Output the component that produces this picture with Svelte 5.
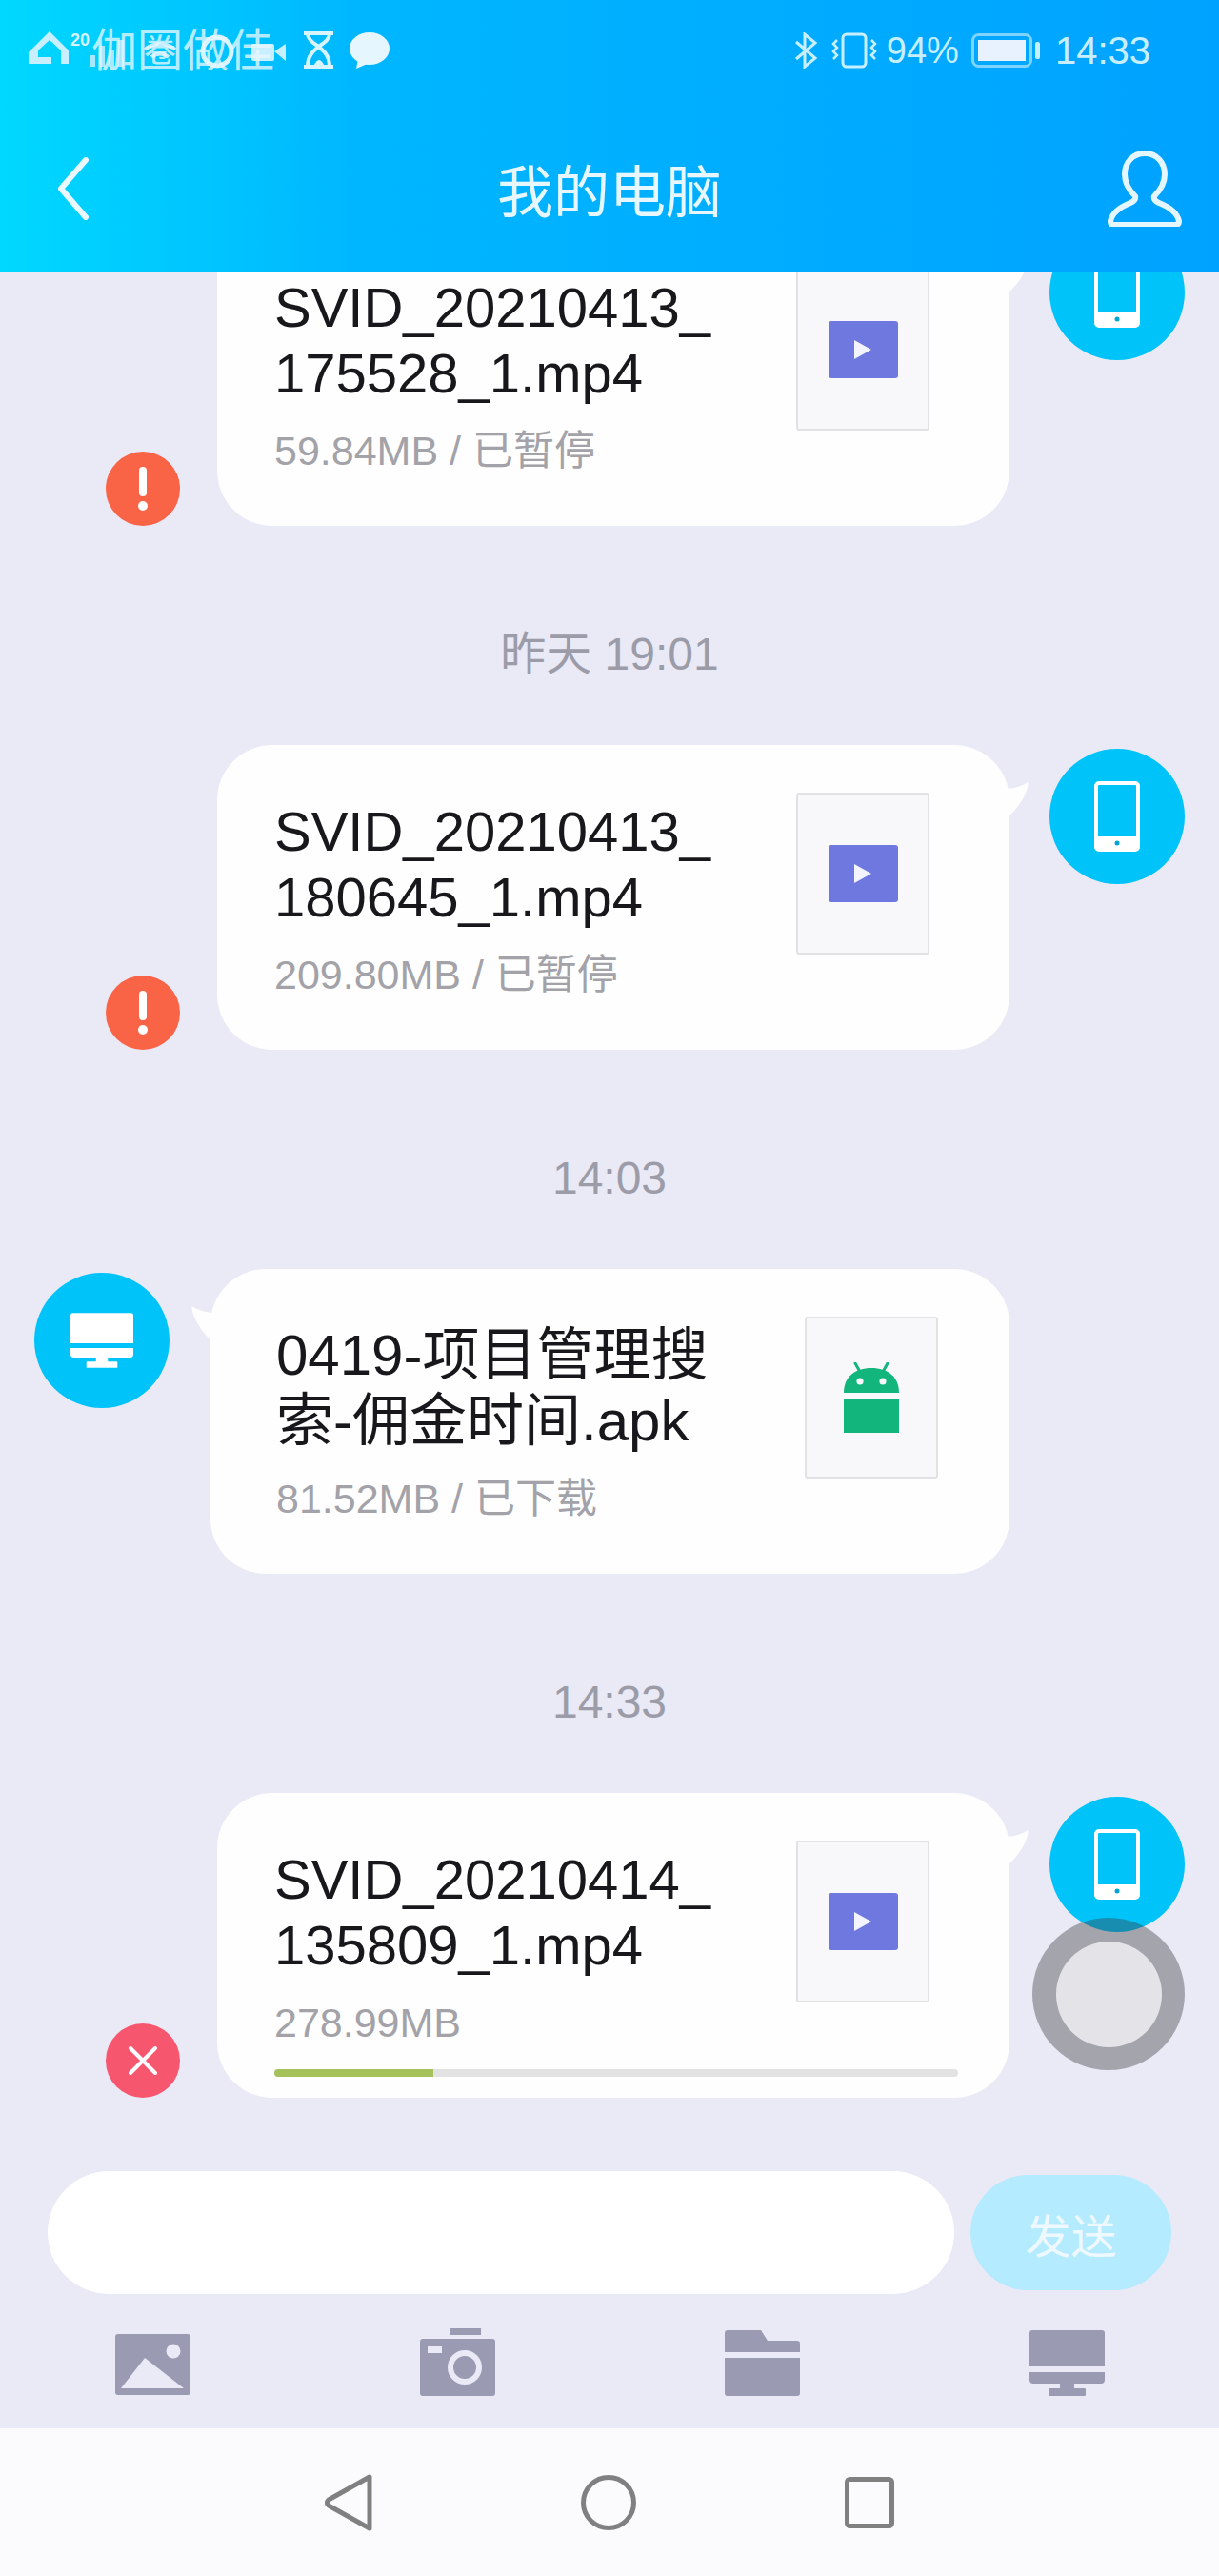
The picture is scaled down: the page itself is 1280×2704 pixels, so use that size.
<script>
  const entries = [
    { time: '', side: 'out', name: 'SVID_20210413_175528_1.mp4', size: '59.84MB / 已暂停', kind: 'video', badge: 'warn' },
    { time: '昨天 19:01', side: 'out', name: 'SVID_20210413_180645_1.mp4', size: '209.80MB / 已暂停', kind: 'video', badge: 'warn' },
    { time: '14:03', side: 'in', name: '0419-项目管理搜索-佣金时间.apk', size: '81.52MB / 已下载', kind: 'apk' },
    { time: '14:33', side: 'out', name: 'SVID_20210414_135809_1.mp4', size: '278.99MB', kind: 'video', badge: 'cancel', progress: 23.3 }
  ];
</script>

{#snippet phoneIcon()}
  <svg class="avatar-icon" width="48" height="74" viewBox="0 0 48 74">
    <rect x="2" y="2" width="44" height="70" rx="3" fill="none" stroke="#fff" stroke-width="4" />
    <rect x="2" y="58" width="44" height="14" fill="#fff" />
    <circle cx="24" cy="65" r="2.5" fill="#00a5d8" />
  </svg>
{/snippet}

{#snippet monitorIcon(w, h, fill)}
  <svg width={w} height={h} viewBox="0 0 79 69">
    <path d="M3 0H76a3 3 0 0 1 3 3V38H0V3a3 3 0 0 1 3-3Z" fill={fill} />
    <path d="M0 44H79V52a4 4 0 0 1-4 4H4a4 4 0 0 1-4-4Z" fill={fill} />
    <rect x="32" y="56" width="15" height="6" fill={fill} />
    <rect x="20" y="61" width="39" height="8" rx="1" fill={fill} />
  </svg>
{/snippet}

<div class="phone">
  <header class="top">
    <div class="status">
      <svg class="status-left" width="400" height="70" viewBox="0 0 400 70">
        <path d="M10 40 L32 18 L52 38 V52 H44 V38 L32 27 L20 38 V45 H34 V52 H10Z" fill="#c8efff" transform="translate(0 -3)" />
        <text x="54" y="30" class="tiny">20</text>
        <g fill="#a8e8ff">
          <rect x="74" y="40" width="6" height="12" />
          <rect x="84" y="30" width="6" height="22" />
          <rect x="94" y="34" width="6" height="18" />
          <rect x="104" y="24" width="6" height="28" />
        </g>
        <path d="M132 34 q16-12 32 0 M139 42 q9-7 18 0" fill="none" stroke="#c8efff" stroke-width="4" />
        <circle cx="208" cy="36" r="15" fill="none" stroke="#d8f4ff" stroke-width="5" />
        <rect x="244" y="28" width="24" height="18" rx="2" fill="#c8efff" />
        <path d="M268 36 L280 28 V46Z" fill="#c8efff" />
        <path d="M299 17 H330 M299 52 H330 M303 17 C303 30 326 30 326 52 M326 17 C326 30 303 30 303 52" fill="none" stroke="#d8f4ff" stroke-width="4" />
        <path d="M309 52 Q315 38 321 52Z" fill="#d8f4ff" />
        <ellipse cx="368" cy="33" rx="21" ry="17" fill="#e6f6ff" />
        <path d="M356 44 L354 54 L368 48Z" fill="#e6f6ff" />
      </svg>
      <span class="ghost-title">伽圈做佳</span>

      <div class="status-right">
        <svg width="26" height="38" viewBox="0 0 26 38">
          <path d="M3 10 L23 27 L12 36 V2 L23 11 L3 28" fill="none" stroke="#c8efff" stroke-width="3" />
        </svg>
        <svg class="vibrate" width="52" height="38" viewBox="0 0 52 38">
          <rect x="14" y="2" width="24" height="34" rx="4" fill="none" stroke="#c8efff" stroke-width="3" />
          <path d="M8 8 l-4 4 4 4 -4 4 4 4 -4 4 M44 8 l4 4 -4 4 4 4 -4 4 4 4" fill="none" stroke="#c8efff" stroke-width="2.5" />
        </svg>
        <span class="pct">94%</span>
        <svg class="battery" width="72" height="36" viewBox="0 0 72 36">
          <rect x="1.5" y="1.5" width="61" height="33" rx="6" fill="none" stroke="#7fd4ff" stroke-width="3" />
          <rect x="7" y="7" width="50" height="22" fill="#e8f2ff" />
          <rect x="67" y="9" width="5" height="18" rx="2" fill="#c8efff" />
        </svg>
        <span class="clock">14:33</span>
      </div>
    </div>

    <div class="nav">
      <svg class="back" width="34" height="66" viewBox="0 0 34 66">
        <path d="M30 3 L4 33 L30 63" fill="none" stroke="#eaf8ff" stroke-width="6" stroke-linecap="round" stroke-linejoin="round" />
      </svg>
      <h1>我的电脑</h1>
      <svg class="person" width="80" height="80" viewBox="0 0 80 80">
        <path d="M40 3C27 3 19 13 19 25C19 34 24 42 30 48C31 51 29 53 25 55C15 59 6 65 4 74Q4 78 8 78L72 78Q76 78 76 74C74 65 65 59 55 55C51 53 49 51 50 48C56 42 61 34 61 25C61 13 53 3 40 3Z" fill="none" stroke="#e4f6ff" stroke-width="6" />
      </svg>
    </div>
  </header>

  <main class="messages">
    {#each entries as m}
      <section class="entry">
        {#if m.time}<div class="time">{m.time}</div>{/if}
        <div class="row {m.side}">
          {#if m.side === 'in'}
            <div class="avatar">{@render monitorIcon(66, 60, '#fff')}</div>
          {:else}
            <div class="badge {m.badge}">
              {#if m.badge === 'warn'}
                <svg width="20" height="50" viewBox="0 0 20 50">
                  <rect x="6" y="2" width="8" height="31" rx="4" fill="#fff" />
                  <circle cx="10" cy="43" r="5" fill="#fff" />
                </svg>
              {:else}
                <svg width="32" height="32" viewBox="0 0 32 32">
                  <path d="M3 3 L29 29 M29 3 L3 29" stroke="#fff" stroke-width="4" stroke-linecap="round" />
                </svg>
              {/if}
            </div>
          {/if}

          <div class="bubble">
            <svg class="tail" width="24" height="36" viewBox="0 0 24 36">
              <path d="M0 7 Q13 6 23 0 C21 14 13 26 2 36 Z" fill="#fefefe" />
            </svg>
            <div class="body">
              <div class="info">
                <div class="name" class:cjk={m.kind === 'apk'}>{m.name}</div>
                <div class="size">{m.size}</div>
              </div>
              <div class="thumb">
                {#if m.kind === 'video'}
                  <div class="play"><span class="arrow"></span></div>
                {:else}
                  <svg width="60" height="74" viewBox="0 0 60 74">
                    <path d="M13 1 L18 10 M47 1 L42 10" fill="none" stroke="#12b57c" stroke-width="3" stroke-linecap="round" />
                    <path d="M1 32 C1 15 13 6 30 6 C47 6 59 15 59 32Z" fill="#12b57c" />
                    <circle cx="18" cy="20" r="3.6" fill="#f8f8fb" />
                    <circle cx="42" cy="20" r="3.6" fill="#f8f8fb" />
                    <rect x="1" y="38" width="58" height="36" fill="#12b57c" />
                  </svg>
                {/if}
              </div>
            </div>
            {#if m.progress}
              <div class="track"><div class="fill" style="width: {m.progress}%"></div></div>
            {/if}
          </div>

          {#if m.side === 'out'}
            <div class="avatar">{@render phoneIcon()}</div>
          {/if}
        </div>
      </section>
    {/each}
  </main>

  <div class="composer">
    <div class="input"></div>
    <button class="send">发送</button>
  </div>

  <div class="tools">
    <svg width="79" height="64" viewBox="0 0 79 64">
      <rect width="79" height="64" rx="3" fill="#9a9bb3" />
      <circle cx="61" cy="18" r="7.5" fill="#eae9f6" />
      <path d="M31 25 L72 57 H6Z" fill="#eae9f6" />
    </svg>
    <svg width="79" height="71" viewBox="0 0 79 71">
      <rect x="32" y="0" width="32" height="7" fill="#9a9bb3" />
      <rect y="11" width="79" height="60" rx="3" fill="#9a9bb3" />
      <rect x="8" y="19" width="15" height="7" fill="#eae9f6" />
      <circle cx="47" cy="41" r="15" fill="none" stroke="#eae9f6" stroke-width="6" />
    </svg>
    <svg width="79" height="69" viewBox="0 0 79 69">
      <path d="M3 0H38L45 11H76a3 3 0 0 1 3 3V23H0V3a3 3 0 0 1 3-3Z" fill="#9a9bb3" />
      <path d="M0 29H79V66a3 3 0 0 1-3 3H3a3 3 0 0 1-3-3Z" fill="#9a9bb3" />
    </svg>
    {@render monitorIcon(79, 69, '#9a9bb3')}
  </div>

  <footer class="navbar">
    <svg width="50" height="60" viewBox="0 0 50 60">
      <path d="M47 3 V57 L4 33 Q1 30 4 27Z" fill="none" stroke="#808080" stroke-width="5" stroke-linejoin="round" />
    </svg>
    <svg width="58" height="58" viewBox="0 0 58 58">
      <circle cx="29" cy="29" r="26.5" fill="none" stroke="#808080" stroke-width="5" />
    </svg>
    <svg width="52" height="54" viewBox="0 0 52 54">
      <rect x="2.5" y="2.5" width="47" height="49" rx="3" fill="none" stroke="#808080" stroke-width="5" />
    </svg>
  </footer>

  <div class="assist"><div class="assist-core"></div></div>
</div>

<style>
  :global(body) {
    margin: 0;
    background: #eae9f6;
  }

  .phone {
    position: relative;
    width: 1280px;
    height: 2704px;
    display: flex;
    flex-direction: column;
    overflow: hidden;
    background: #eae9f6;
    font-family: "Liberation Sans", "Noto Sans CJK SC", sans-serif;
  }

  .top {
    flex: none;
    height: 285px;
    background: linear-gradient(90deg, #00d8ff 0%, #00b6ff 30%, #00a2ff 100%);
    color: #fff;
  }

  .status {
    position: relative;
    height: 104px;
    display: flex;
    align-items: center;
    justify-content: space-between;
    padding: 2px 72px 0 20px;
    box-sizing: border-box;
  }

  .tiny {
    font-size: 18px;
    font-weight: 700;
    fill: #d8f4ff;
  }

  .ghost-title {
    position: absolute;
    left: 96px;
    top: 24px;
    font-size: 48px;
    line-height: 60px;
    color: rgba(232, 247, 255, 0.78);
    white-space: nowrap;
  }

  .status-right {
    display: flex;
    align-items: center;
    color: #c8efff;
  }

  .vibrate {
    margin-left: 12px;
  }

  .pct {
    margin-left: 8px;
    font-size: 38px;
  }

  .battery {
    margin-left: 13px;
  }

  .clock {
    margin-left: 16px;
    font-size: 40px;
  }

  .nav {
    height: 175px;
    padding: 6px 38px 0;
    display: grid;
    grid-template-columns: 1fr auto 1fr;
    align-items: center;
  }

  .back {
    margin-left: 22px;
  }

  .person {
    justify-self: end;
  }

  h1 {
    margin: 0;
    font-size: 59px;
    font-weight: 400;
    color: #e6f7ff;
  }

  .messages {
    flex: 1;
    min-height: 0;
    overflow: hidden;
    display: flex;
    flex-direction: column;
    justify-content: flex-end;
    padding-bottom: 77px;
  }

  .entry {
    flex: none;
  }

  .time {
    height: 70px;
    margin: 100px 0 60px;
    text-align: center;
    font-size: 48px;
    line-height: 70px;
    color: #9c9ca8;
  }

  .row {
    display: flex;
    padding: 0 36px;
  }

  .row.out {
    padding-left: 111px;
  }

  .row.in {
    padding-right: 220px;
  }

  .badge {
    flex: none;
    align-self: flex-end;
    width: 78px;
    height: 78px;
    margin-right: 39px;
    border-radius: 50%;
    display: flex;
    align-items: center;
    justify-content: center;
  }

  .badge.warn {
    background: #f96447;
  }

  .badge.cancel {
    background: #f7566f;
  }

  .avatar {
    flex: none;
    width: 142px;
    height: 142px;
    margin-top: 4px;
    border-radius: 50%;
    background: #00c3fa;
    display: flex;
    align-items: center;
    justify-content: center;
  }

  .row.out .avatar {
    margin-left: 42px;
  }

  .row.in .avatar {
    margin-right: 43px;
  }

  .bubble {
    position: relative;
    flex: 1;
    min-width: 0;
    height: 320px;
    box-sizing: border-box;
    padding: 50px 54px 0 60px;
    border-radius: 58px;
    background: #fefefe;
  }

  .row.in .bubble {
    padding: 50px 75px 0 69px;
  }

  .tail {
    position: absolute;
    top: 39px;
    right: -21px;
  }

  .row.in .tail {
    right: auto;
    left: -21px;
    transform: scaleX(-1);
  }

  .body {
    display: flex;
    justify-content: space-between;
    align-items: flex-start;
    height: 216px;
    padding-right: 30px;
  }

  .row.in .body {
    padding-right: 0;
  }

  .info {
    width: 470px;
    padding-top: 7px;
  }

  .name {
    font-size: 58px;
    line-height: 68.5px;
    color: #17171c;
    line-break: anywhere;
    overflow-wrap: anywhere;
  }

  .name.cjk {
    font-size: 60px;
  }

  .size {
    margin-top: 22px;
    font-size: 43px;
    line-height: 50px;
    color: #a2a2a8;
    white-space: nowrap;
  }

  .thumb {
    flex: none;
    width: 140px;
    height: 170px;
    box-sizing: border-box;
    border: 2px solid #e2e2e6;
    border-radius: 3px;
    background: #f8f8fb;
    display: flex;
    align-items: center;
    justify-content: center;
  }

  .play {
    width: 73px;
    height: 60px;
    border-radius: 3px;
    background: #6e78de;
    display: flex;
    align-items: center;
    justify-content: center;
  }

  .arrow {
    width: 0;
    height: 0;
    border-left: 18px solid #f4f4ff;
    border-top: 10px solid transparent;
    border-bottom: 10px solid transparent;
  }

  .track {
    height: 8px;
    margin-top: 24px;
    border-radius: 4px;
    background: #e2e2e2;
    overflow: hidden;
  }

  .fill {
    height: 100%;
    background: #a5c25a;
  }

  .composer {
    flex: none;
    height: 129px;
    padding: 0 50px;
    display: flex;
    align-items: center;
    gap: 17px;
  }

  .input {
    flex: 1;
    height: 129px;
    border-radius: 65px;
    background: #fff;
  }

  .send {
    flex: none;
    width: 211px;
    height: 121px;
    border: 0;
    border-radius: 61px;
    background: #b4ebff;
    color: #eef8ff;
    font-family: inherit;
    font-size: 48px;
  }

  .tools {
    flex: none;
    height: 72px;
    margin-top: 35px;
    padding: 0 0 34px 121px;
    display: flex;
    align-items: flex-end;
    gap: 241px;
  }

  .tools svg:first-child {
    margin-bottom: 1px;
  }

  .navbar {
    flex: none;
    height: 155px;
    display: flex;
    align-items: center;
    justify-content: center;
    gap: 219px;
    background: #fbfafd;
  }

  .assist {
    position: absolute;
    left: 1084px;
    top: 2013px;
    width: 160px;
    height: 160px;
    border-radius: 50%;
    background: rgba(60, 60, 66, 0.4);
    display: flex;
    align-items: center;
    justify-content: center;
  }

  .assist-core {
    width: 111px;
    height: 111px;
    border-radius: 50%;
    background: #e4e4e8;
  }
</style>
